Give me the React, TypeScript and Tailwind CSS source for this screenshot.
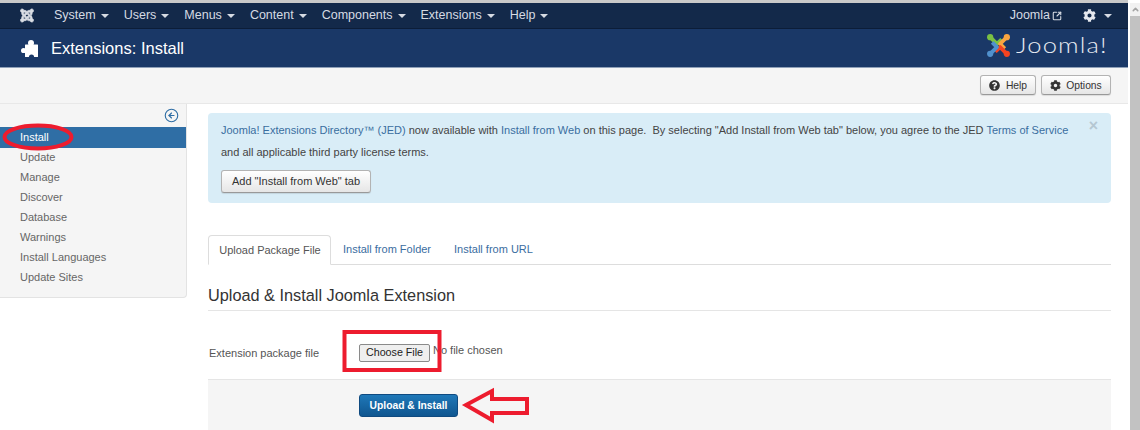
import { ChevronUp, CircleArrowLeft, SquareArrowOutUpRight } from "lucide-react";
import { FaCog, FaJoomla, FaQuestionCircle } from "react-icons/fa";

const menus = ["System", "Users", "Menus", "Content", "Components", "Extensions", "Help"];
const sideItems = ["Update", "Manage", "Discover", "Database", "Warnings", "Install Languages", "Update Sites"];

function Caret({ className = "" }: { className?: string }) {
  return <span className={`inline-block w-0 h-0 border-x-[4px] border-x-transparent border-t-[4px] border-t-current ${className}`} />;
}

function PuzzleIcon() {
  return (
    <svg viewBox="0 0 17 17" className="ml-[21px] w-[17px] h-[17px]">
      <rect x="4" y="4.5" width="13" height="12.5" rx="0.5" fill="#fff" />
      <circle cx="10" cy="3" r="3" fill="#fff" />
      <circle cx="2.6" cy="10.5" r="2.6" fill="#fff" />
      <circle cx="10.5" cy="17" r="2.6" fill="#1a3867" />
    </svg>
  );
}

function JoomlaMark() {
  return (
    <svg viewBox="0 0 24 24" className="w-[25px] h-[25px]" fill="none" strokeWidth="3.7" strokeLinejoin="round">
      <path d="M4 4 L10.5 10.5 L15 6" stroke="#7ac143" />
      <circle cx="4" cy="4" r="3" fill="#7ac143" />
      <path d="M20 4 L13.5 10.5 L18 15" stroke="#f9a541" />
      <circle cx="20" cy="4" r="3" fill="#f9a541" />
      <path d="M20 20 L13.5 13.5 L9 18" stroke="#f44321" />
      <circle cx="20" cy="20" r="3" fill="#f44321" />
      <path d="M4 20 L10.5 13.5 L6 9" stroke="#5091cd" />
      <circle cx="4" cy="20" r="3" fill="#5091cd" />
    </svg>
  );
}

function GreyButton({ children, className = "" }: { children: React.ReactNode; className?: string }) {
  return (
    <button
      type="button"
      className={`flex items-center justify-center rounded-[3px] border border-[#b3b3b3] border-b-[#999] bg-gradient-to-b from-white to-[#e6e6e6] text-[#333] shadow-[0_1px_1px_rgba(0,0,0,0.1)] ${className}`}
    >
      {children}
    </button>
  );
}

export default function App() {
  return (
    <div className="relative w-[1140px] h-[430px] overflow-hidden flex bg-white font-['Liberation_Sans',Arial,sans-serif] text-[11px] text-[#555]">
      <div className="w-[1128px] flex flex-col shrink-0">
        <div className="h-[3px] bg-[#c9c9c9] shrink-0" />

        {/* top navbar */}
        <nav className="h-[26px] shrink-0 bg-[#13294a] border-b border-[#0c1d38] flex items-center text-[#d6dbe3] text-[12.5px]">
          <FaJoomla className="ml-[20px] w-[14px] h-[15px] text-[#d9dde4]" stroke="currentColor" strokeWidth={24} />
          <div className="ml-[20px] flex items-center gap-[15px]">
            {menus.map(m => (
              <span key={m} className="flex items-center gap-[5px]">
                {m}
                <Caret />
              </span>
            ))}
          </div>
          <span className="ml-auto flex items-center gap-[2px]">
            Joomla
            <SquareArrowOutUpRight className="w-[10px] h-[10px]" strokeWidth={2.6} />
          </span>
          <span className="ml-[21px] mr-[16px] flex items-center gap-[8px]">
            <FaCog className="w-[13px] h-[13px] text-[#e5e8ee]" />
            <Caret />
          </span>
        </nav>

        {/* title bar */}
        <header className="h-[39px] shrink-0 bg-[#1a3867] border-b border-[#8fa0b8] flex items-center text-white">
          <PuzzleIcon />
          <h1 className="ml-[13px] text-[16.5px] leading-none">Extensions: Install</h1>
          <div className="ml-auto mr-[21px] flex items-center gap-[5px] -mt-[6px]">
            <JoomlaMark />
            <span className="w-[91px] origin-left scale-x-[1.16] whitespace-nowrap font-['Lato',sans-serif] font-light tracking-[1px] text-[22px] leading-none text-[#e8ecf2]">
              Joomla!
            </span>
          </div>
        </header>

        {/* toolbar */}
        <div className="h-[36px] shrink-0 bg-[#f5f5f5] border-b border-[#e8e8e8] flex items-start justify-end gap-[5px] pt-[7px] pr-[17px] text-[10.3px]">
          <GreyButton className="w-[56px] h-[20px] gap-[6px] pt-px">
            <FaQuestionCircle className="w-[11px] h-[11px]" />
            Help
          </GreyButton>
          <GreyButton className="w-[70px] h-[20px] gap-[5px] pt-px">
            <FaCog className="w-[11px] h-[11px]" />
            Options
          </GreyButton>
        </div>

        <div className="flex flex-1 min-h-0">
          {/* sidebar */}
          <aside className="w-[187px] h-[194px] shrink-0 bg-[#f5f5f5] border-r border-b border-[#e3e3e3] rounded-br-[4px]">
            <div className="h-[23px] flex items-center justify-end pr-[7px]">
              <CircleArrowLeft className="w-[15px] h-[15px] text-[#2f6ea5]" strokeWidth={1.8} />
            </div>
            <div className="h-[21px] bg-[#2f6ea5] text-white pl-[20px] leading-[20px]">Install</div>
            <ul className="mt-[-1px]">
              {sideItems.map(s => (
                <li key={s} className="h-[20px] pl-[20px] leading-[20px] text-[#666]">{s}</li>
              ))}
            </ul>
          </aside>

          {/* main */}
          <main className="flex-1 min-w-0 pl-[21px] pr-[17px] pt-[9px]">
            <div className="relative h-[90px] bg-[#d9edf7] rounded-[4px] px-[13px] pt-[10px] text-[#444]">
              <p className="leading-[15px] whitespace-nowrap">
                <span className="text-[#3a6d9f]">Joomla! Extensions Directory™ (JED)</span> now available with{" "}
                <span className="text-[#3a6d9f]">Install from Web</span> on this page.&nbsp; By selecting "Add Install from Web tab" below, you agree to the JED{" "}
                <span className="text-[#3a6d9f]">Terms of Service</span>
              </p>
              <p className="mt-[7px] leading-[15px]">and all applicable third party license terms.</p>
              <GreyButton className="mt-[10px] w-[150px] h-[23px]">Add "Install from Web" tab</GreyButton>
              <span className="absolute right-[13px] top-[5px] text-[16px] font-bold leading-none text-[#b5c7d2]">×</span>
            </div>

            {/* tabs */}
            <div className="mt-[32px] h-[30px] flex items-end border-b border-[#ddd]">
              <div className="w-[123px] h-[30px] -mb-px pl-px bg-white border border-[#ddd] border-b-white rounded-t-[4px] flex items-center justify-center text-[#555]">
                Upload Package File
              </div>
              <div className="ml-[12px] h-[30px] flex items-center text-[#3a6d9f]">Install from Folder</div>
              <div className="ml-[23px] h-[30px] flex items-center text-[#3a6d9f]">Install from URL</div>
            </div>

            <h2 className="mt-[20px] text-[16.3px] leading-[20px] text-[#333]">Upload &amp; Install Joomla Extension</h2>
            <div className="mt-[5px] border-b border-[#e5e5e5]" />

            <div className="mt-[32px] h-[19px] flex items-center">
              <label className="w-[151px] pl-px pt-[2px] text-[#555]">Extension package file</label>
              <button type="button" className="w-[71px] h-[18px] rounded-[2px] border border-[#8a8a8a] bg-[#efefef] text-[10.7px] text-[#222] flex items-center justify-center">
                Choose File
              </button>
              <span className="ml-[3px] -mt-[4px] text-[#555]">No file chosen</span>
            </div>

            <div className="mt-[17px] h-[60px] bg-[#f5f5f5] border-t border-[#e5e5e5] pl-[151px] pt-[14px]">
              <button type="button" className="w-[99px] h-[23px] rounded-[3px] border border-[#0f4a80] bg-gradient-to-b from-[#1f78b8] to-[#0f5690] text-white text-[10.3px] font-bold flex items-center justify-center">
                Upload &amp; Install
              </button>
            </div>
          </main>
        </div>
      </div>

      {/* scrollbar */}
      <div className="flex-1 flex flex-col pt-[3px] pl-[2px] bg-white">
        <div className="h-[13px] flex items-center justify-center bg-[#f1f1f1]">
          <ChevronUp className="w-[9px] h-[9px] text-[#a3a3a3]" strokeWidth={4} />
        </div>
        <div className="flex-1 bg-[#c2c2c2]" />
      </div>

      {/* red annotations drawn over the screenshot */}
      <svg className="absolute left-0 top-0 pointer-events-none" width="1140" height="430" fill="none" stroke="#ed1c2e">
        <ellipse cx="38" cy="137" rx="33.5" ry="11.5" strokeWidth="4" />
        <rect x="344.5" y="332" width="95" height="38" strokeWidth="4" />
        <path d="M466 405 L492 391 L492 399 L527 399 L527 413 L492 413 L492 420 Z" strokeWidth="4" />
      </svg>
    </div>
  );
}
